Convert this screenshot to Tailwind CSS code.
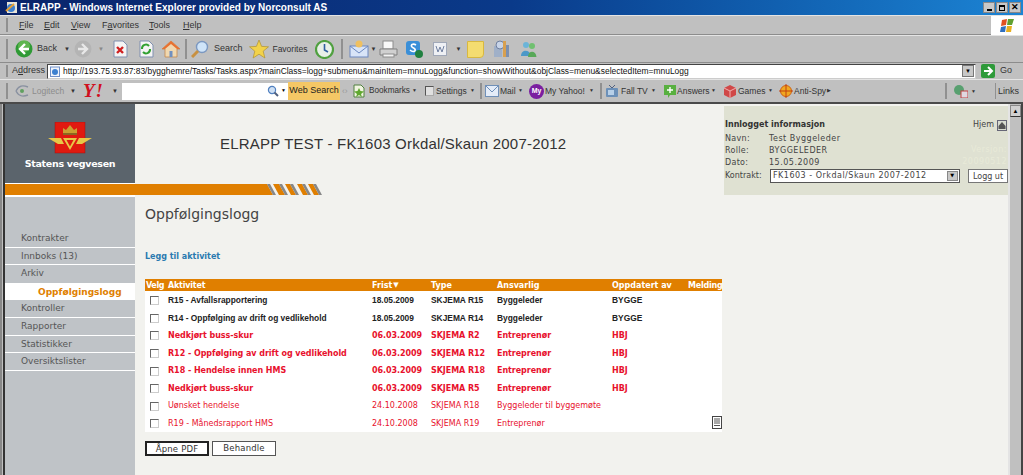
<!DOCTYPE html>
<html lang="en">
<head>
<meta charset="UTF-8">
<title>ELRAPP</title>
<script src="https://cdn.jsdelivr.net/npm/@tailwindcss/browser@4"></script>
</head>
<body class="w-[1023px] h-[475px] overflow-hidden bg-[#c0c0c0] flex flex-col font-['Liberation_Sans',sans-serif] text-[9px] text-[#222]">

<!-- title bar -->
<div class="h-[15px] flex items-center bg-gradient-to-r from-[#0a246a] via-[#0a3a8a] to-[#1c84d4] pl-[5px] pr-[2px]">
    <svg width="13" height="13" viewBox="0 0 13 13"><rect x="2" y="1" width="10" height="11" fill="#e8e4d8"/><circle cx="6" cy="7" r="4" fill="#3c7fd0"/><path d="M1 10 L9 3" stroke="#e8a030" stroke-width="2"/></svg>
    <span class="ml-[2px] text-white font-bold text-[10px]">ELRAPP - Windows Internet Explorer provided by Norconsult AS</span>
    <div class="ml-auto flex gap-[1px]">
        <div class="w-[12px] h-[11px] bg-[#c8c8c8] border border-[#888] flex items-end justify-center pb-[1px]"><div class="w-[5px] h-[2px] bg-black"></div></div>
        <div class="w-[12px] h-[11px] bg-[#c8c8c8] border border-[#888] flex items-center justify-center"><div class="w-[6px] h-[6px] border border-t-2 border-black"></div></div>
        <div class="w-[12px] h-[11px] bg-[#c8c8c8] border border-[#888] flex items-center justify-center text-[9px] leading-none font-bold text-black">✕</div>
    </div>
</div>

<!-- menu -->
<div class="h-[20px] flex items-center border-t border-[#e4e4e4] border-b border-b-[#8c8c8c] relative text-[#333]">
    <div class="ml-[6px] w-[2px] h-[14px] border-l border-r border-[#909090] bg-white"></div>
    <span class="absolute left-[19px] top-[3px]"><span class="underline">F</span>ile</span>
    <span class="absolute left-[44px] top-[3px]"><span class="underline">E</span>dit</span>
    <span class="absolute left-[71px] top-[3px]"><span class="underline">V</span>iew</span>
    <span class="absolute left-[102px] top-[3px]">F<span class="underline">a</span>vorites</span>
    <span class="absolute left-[149px] top-[3px]"><span class="underline">T</span>ools</span>
    <span class="absolute left-[183px] top-[3px]"><span class="underline">H</span>elp</span>
    <div class="ml-auto w-[32px] h-[19px] bg-white flex items-center justify-center">
        <svg width="16" height="15" viewBox="0 0 16 15"><path d="M3 2 L8 1 L7 7 L2 8Z" fill="#e05020"/><path d="M9 1 L15 1 L13 7 L8 7Z" fill="#60a030"/><path d="M2 9 L7 8 L6 14 L1 14Z" fill="#3070c0"/><path d="M8 8 L13 8 L12 14 L7 14Z" fill="#e8b020"/></svg>
    </div>
</div>

<!-- standard buttons -->
<div class="h-[27px] flex items-center border-t border-[#e4e4e4] text-[#333] relative">
    <div class="ml-[6px] w-[2px] h-[20px] border-l border-r border-[#909090] bg-white"></div>
    <svg class="ml-[7px]" width="18" height="18" viewBox="0 0 18 18"><circle cx="9" cy="9" r="8.5" fill="#2f9a35"/><circle cx="9" cy="6" r="6" fill="#8ed06a" opacity=".5"/><path d="M10 4 L5 9 L10 14 M5 9 H14" stroke="#fff" stroke-width="2.4" fill="none"/></svg>
    <span class="ml-[4px]">Back</span>
    <span class="ml-[7px] text-[6px] text-[#333]">▼</span>
    <svg class="ml-[4px]" width="18" height="18" viewBox="0 0 18 18"><circle cx="9" cy="9" r="8.5" fill="#b4b4b4"/><path d="M8 4 L13 9 L8 14 M13 9 H4" stroke="#e8e8e8" stroke-width="2.4" fill="none"/></svg>
    <span class="ml-[6px] text-[6px] text-[#888]">▼</span>
    <svg class="ml-[8px]" width="16" height="18" viewBox="0 0 16 18"><path d="M2 1 H11 L15 5 V17 H2Z" fill="#f4f4f4" stroke="#8090b0"/><path d="M5 7 L11 13 M11 7 L5 13" stroke="#d02020" stroke-width="2.4"/></svg>
    <svg class="ml-[10px]" width="16" height="18" viewBox="0 0 16 18"><path d="M2 1 H11 L15 5 V17 H2Z" fill="#f4f4f4" stroke="#8090b0"/><path d="M4 9 A4 4 0 0 1 11 6 M12 9 A4 4 0 0 1 5 12" stroke="#30a030" stroke-width="2" fill="none"/></svg>
    <svg class="ml-[8px]" width="18" height="18" viewBox="0 0 18 18"><path d="M9 1 L18 9 H15 V17 H3 V9 H0Z" fill="#f0d8b0" stroke="#c08040" stroke-width=".7"/><path d="M9 1 L18 9 H15 L9 4 L3 9 H0Z" fill="#e87030"/><rect x="7.5" y="11" width="3" height="6" fill="#7090c0"/></svg>
    <div class="ml-[5px] w-[2px] h-[20px] border-l border-r border-[#909090] bg-white"></div>
    <svg class="ml-[4px]" width="18" height="18" viewBox="0 0 18 18"><circle cx="11" cy="7" r="5.5" fill="#cfe4f8" stroke="#7c98c0" stroke-width="1.4"/><path d="M7 11 L1 17" stroke="#c89040" stroke-width="3"/></svg>
    <span class="ml-[5px]">Search</span>
    <svg class="ml-[7px]" width="20" height="20" viewBox="0 0 20 20"><path d="M10 1 L12.6 7.4 L19.5 7.8 L14.2 12.2 L15.9 19 L10 15.2 L4.1 19 L5.8 12.2 L.5 7.8 L7.4 7.4Z" fill="#f2d24a" stroke="#b09030" stroke-width=".7"/></svg>
    <span class="ml-[3px] w-[34px] whitespace-nowrap text-[8.5px]">Favorites</span>
    <svg class="ml-[9px]" width="19" height="19" viewBox="0 0 19 19"><circle cx="9.5" cy="9.5" r="8.5" fill="#e8f0e8" stroke="#50a040" stroke-width="2.2"/><path d="M9.5 4 V10 L13 12" stroke="#3060a0" stroke-width="1.6" fill="none"/></svg>
    <div class="ml-[7px] w-[2px] h-[20px] border-l border-r border-[#909090] bg-white"></div>
    <svg class="ml-[6px]" width="20" height="18" viewBox="0 0 20 18"><rect x="1" y="6" width="18" height="11" fill="#d8e4f8" stroke="#6c88c0"/><path d="M1 6 L10 13 L19 6" stroke="#6c88c0" fill="none"/><circle cx="10" cy="4" r="3.5" fill="#f0c060"/></svg>
    <span class="ml-[1px] text-[6px]">▼</span>
    <svg class="ml-[3px]" width="19" height="18" viewBox="0 0 19 18"><rect x="4" y="1" width="10" height="8" fill="#f8f8f8" stroke="#8c8c8c"/><path d="M1 9 H18 V15 H1Z" fill="#d0d0d0" stroke="#808080"/><rect x="4" y="14" width="11" height="3" fill="#f4f4f4" stroke="#8c8c8c"/></svg>
    <svg class="ml-[7px]" width="18" height="18" viewBox="0 0 18 18"><rect x="1" y="1" width="14" height="14" rx="3" fill="#3a8fd8"/><path d="M11 5 C8 3 5 5 7 7 C9 9 11 8 10 11 C8 12 6 11 5 10" stroke="#fff" stroke-width="1.6" fill="none"/><circle cx="14" cy="14" r="4" fill="#208040"/></svg>
    <svg class="ml-[10px]" width="14" height="14" viewBox="0 0 14 14"><rect x=".5" y=".5" width="13" height="13" fill="#eef0f4" stroke="#a0a8b8"/><path d="M3 4 L5 10 L7 5 L9 10 L11 4" stroke="#7080a0" fill="none"/></svg>
    <span class="ml-[8px] text-[6px]">▼</span>
    <div class="ml-[6px] w-[17px] h-[17px] bg-[#f4dc70] border border-[#d8b840] rounded-br-[4px]"></div>
    <svg class="ml-[8px]" width="18" height="18" viewBox="0 0 18 18"><rect x="2" y="6" width="8" height="11" fill="#a0b0c8"/><circle cx="8" cy="5" r="4" fill="#c8d4e8" stroke="#7080a0"/><rect x="11" y="1" width="3" height="16" fill="#d8a050"/><rect x="14" y="5" width="3" height="12" fill="#7c90b0"/></svg>
    <svg class="ml-[10px]" width="17" height="17" viewBox="0 0 17 17"><circle cx="6" cy="4" r="3" fill="#6cb4d8"/><circle cx="12" cy="5" r="3" fill="#70c070"/><path d="M1 15 C1 8 10 8 11 15Z" fill="#4c98c8"/><path d="M8 16 C8 9 16 9 16.500 16Z" fill="#58a858"/></svg>
</div>

<!-- address -->
<div class="h-[17px] flex items-center border-t border-[#8c8c8c] text-[#333] relative">
    <div class="ml-[6px] w-[2px] h-[12px] border-l border-r border-[#909090] bg-white"></div>
    <span class="ml-[4px] w-[35px]">A<span class="underline">d</span>dress</span>
    <div class="w-[929px] h-[15px] bg-white border border-[#444] border-b-[#ccc] border-r-[#ccc] flex items-center pl-[2px]">
        <svg width="10" height="11" viewBox="0 0 10 11"><rect x=".5" y="1" width="9" height="9.500" fill="#f0f4fc" stroke="#7090c8"/><circle cx="5" cy="6" r="3" fill="#3c80d0"/></svg>
        <span class="ml-[3px] whitespace-nowrap text-[#111] text-[8.45px]">http://193.75.93.87:83/bygghemre/Tasks/Tasks.aspx?mainClass=logg+submenu&amp;mainItem=mnuLogg&amp;function=showWithout&amp;objClass=menu&amp;selectedItem=mnuLogg</span>
        <div class="ml-auto mr-[1px] w-[12px] h-[12px] bg-[#c8c8c8] border border-[#777] flex items-center justify-center text-[6px] text-black">▼</div>
    </div>
    <svg class="ml-[5px]" width="14" height="14" viewBox="0 0 14 14"><rect width="14" height="14" rx="2" fill="#2e9a3a"/><path d="M7 3 L11 7 L7 11 M11 7 H3" stroke="#fff" stroke-width="2" fill="none"/></svg>
    <span class="ml-[5px]">Go</span>
</div>

<!-- yahoo toolbar -->
<div class="h-[23px] flex items-center border-t border-[#e4e4e4] text-[#333] text-[8.5px] relative whitespace-nowrap">
    <div class="ml-[6px] w-[2px] h-[16px] border-l border-r border-[#909090] bg-white"></div>
    <svg class="ml-[6px]" width="16" height="14" viewBox="0 0 16 14"><path d="M2 7 C5 1 9 1 14 3 M2 7 C5 13 9 13 14 11" stroke="#8890a0" stroke-width="1.4" fill="none"/><circle cx="8" cy="7" r="2" fill="#60a060"/></svg>
    <span class="ml-[2px] text-[#8c8c8c] w-[38px]">Logitech</span>
    <span class="w-[6px] text-[6px]">▼</span>
    <span class="ml-[7px] w-[24px] h-[16px] text-[#d01020] font-['Liberation_Serif',serif] font-bold italic text-[19px] leading-[16px] tracking-[1px]">Y!</span>
    <span class="ml-[5px] w-[6px] text-[6px]">▼</span>
    <div class="ml-[4px] w-[166px] h-[17px] bg-white flex items-center justify-end pr-[2px]">
        <svg width="12" height="12" viewBox="0 0 12 12"><circle cx="5" cy="5" r="3.6" fill="#cfe0f4" stroke="#5080c0" stroke-width="1.2"/><path d="M7.5 7.500 L11 11" stroke="#506080" stroke-width="2"/></svg>
        <span class="ml-[2px] text-[5px] text-black">▼</span>
    </div>
    <div class="w-[52px] h-[18px] bg-[#f4c765] flex items-center justify-center text-[#222] text-[9px]">Web Search</div>
    <span class="ml-[2px] w-[10px] text-[#999]">‹›</span>
    <svg width="14" height="14" viewBox="0 0 14 14"><path d="M2 1 H9 L12 4 V13 H2Z" fill="#f0f4e0" stroke="#508040"/><path d="M7 4 L8.500 7 L12 7.500 L9 10 L10 13 L7 11 L4 13 L5 10 L2 7.500 L5.500 7Z" fill="#60a830"/></svg>
    <span class="ml-[3px] w-[41px] text-[8.2px]">Bookmarks</span>
    <span class="ml-[2px] w-[5px] text-[5px]">▼</span>
    <div class="ml-[8px] w-[9px] h-[10px] border border-[#555] border-r-[#aaa] border-b-[#aaa] bg-[#e0e0e0]"></div>
    <span class="ml-[2px] w-[32px]">Settings</span>
    <span class="ml-[2px] w-[5px] text-[5px]">▼</span>
    <div class="ml-[5px] w-[2px] h-[16px] border-l border-r border-[#909090] bg-white"></div>
    <svg class="ml-[3px]" width="14" height="12" viewBox="0 0 14 12"><rect x=".5" y=".5" width="13" height="11" fill="#e4ecf8" stroke="#7090b8"/><path d="M1 1 L7 7 L13 1" stroke="#7090b8" fill="none"/></svg>
    <span class="ml-[1px] w-[15px]">Mail</span>
    <span class="ml-[3px] w-[5px] text-[5px]">▼</span>
    <div class="ml-[6px] w-[15px] h-[15px] rounded-full bg-[#7a1fa0] text-white text-[7px] font-bold flex items-center justify-center">My</div>
    <span class="ml-[1px] w-[40px]">My Yahoo!</span>
    <span class="ml-[4px] w-[5px] text-[5px]">▼</span>
    <div class="ml-[6px] w-[2px] h-[16px] border-l border-r border-[#909090] bg-white"></div>
    <svg class="ml-[4px]" width="12" height="14" viewBox="0 0 12 14"><path d="M3 1 L6 4 L9 1" stroke="#506080" fill="none"/><rect y="4" width="12" height="9" rx="1" fill="#6c90b8"/><rect x="2" y="6" width="6" height="5" fill="#b8d0e8"/></svg>
    <span class="ml-[3px] w-[27px]">Fall TV</span>
    <span class="ml-[3px] w-[5px] text-[5px]">▼</span>
    <svg class="ml-[8px]" width="12" height="13" viewBox="0 0 12 13"><path d="M0 0 H12 V10 H6 L4 13 V10 H0Z" fill="#58b040"/><path d="M6 2 V8 M3 5 H9" stroke="#fff" stroke-width="1.4"/></svg>
    <span class="ml-[1px] w-[31px]">Answers</span>
    <span class="ml-[3px] w-[5px] text-[5px]">▼</span>
    <svg class="ml-[8px]" width="12" height="13" viewBox="0 0 12 13"><path d="M6 0 L12 3 V10 L6 13 L0 10 V3Z" fill="#d04848"/><path d="M0 3 L6 6 L12 3 M6 6 V13" stroke="#f0b0b0" fill="none"/></svg>
    <span class="ml-[2px] w-[27px]">Games</span>
    <span class="ml-[3px] w-[5px] text-[5px]">▼</span>
    <svg class="ml-[6px]" width="14" height="14" viewBox="0 0 14 14"><circle cx="7" cy="7" r="5.500" fill="#f0a820" stroke="#d06010"/><path d="M7 0 V14 M0 7 H14" stroke="#c04010"/></svg>
    <span class="ml-[1px] w-[33px]">Anti-Spy</span>
    <span class="text-[5px]">▶</span>
    <div class="absolute left-[945px] top-[3px] w-[2px] h-[16px] border-l border-r border-[#909090] bg-white"></div>
    <svg class="absolute left-[953px] top-[4px]" width="15" height="14" viewBox="0 0 15 14"><circle cx="6" cy="6" r="5" fill="#58a070"/><rect x="8" y="7" width="7" height="7" fill="#e0d8e0" stroke="#c04040"/></svg>
    <span class="absolute left-[971px] top-[8px] text-[5px]">▼</span>
    <div class="absolute left-[995px] top-[3px] w-[1px] h-[16px] bg-[#909090]"></div>
    <span class="absolute left-[998px] top-[5px] text-[9px]">Links</span>
</div>

<div class="h-[2px] bg-[#4a4a4a]"></div>

<!-- window content -->
<div class="flex-1 min-h-0 flex">
    <div class="w-[5px] bg-[#c0c0c0] border-l-2 border-r-2 border-r-[#333] border-l-[#888]"></div>
    <div class="w-[719px] flex flex-col bg-[#f2f2ee]">
        <!-- header -->
        <div class="h-[79px] flex">
            <div class="w-[130px] bg-[#5b646c] flex flex-col items-center pt-[18px]">
                <svg width="44" height="32" viewBox="0 0 44 32">
                    <rect x="7" y="0" width="30" height="31" fill="#e01a10" stroke="#a01010" stroke-width=".5"/>
                    <path d="M15 11 V6 L18 8 L22 3 L26 8 L29 6 V11Z" fill="#caa030"/>
                    <rect x="15" y="11" width="14" height="2" fill="#8c6820"/>
                    <path d="M0 16 H13 L16 22 H10 Z M44 16 H31 L28 22 H34Z" fill="#e8c848"/>
                    <path d="M15 16 H29 L22 28Z" fill="#e8c848"/>
                    <path d="M18.500 18 H25.500 L22 24.500Z" fill="#e01a10"/>
                </svg>
                <span class="mt-[3px] text-white font-bold text-[9.5px] font-['DejaVu_Sans',sans-serif] tracking-[-.3px]">Statens vegvesen</span>
            </div>
            <div class="flex-1 pl-[85px] pt-[31px] text-[15px] leading-[17px] text-[#333] tracking-[.2px]">ELRAPP TEST - FK1603 Orkdal/Skaun 2007-2012</div>
        </div>
        <div class="h-[1px] w-[130px] bg-white"></div>
        <!-- orange bar -->
        <div class="h-[11px] flex bg-[#f2f2ee]">
            <div class="w-[256px] bg-[#e07f00]"></div>
            <svg width="62" height="11" viewBox="0 0 62 11">
                <path d="M0 0 H6 L12 11 H0Z" fill="#e07f00"/>
                <path d="M6 0 H9 L15 11 H12Z" fill="#888"/>
                <path d="M12 0 H18 L24 11 H18Z" fill="#e07f00"/><path d="M18 0 L24 11 H27 L21 0Z" fill="#888"/>
                <path d="M24 0 H29 L35 11 H30Z" fill="#e07f00"/><path d="M29 0 L35 11 H38 L32 0Z" fill="#888"/>
                <path d="M36 0 H41 L47 11 H42Z" fill="#e07f00"/><path d="M41 0 L47 11 H50 L44 0Z" fill="#888"/>
                <path d="M47 0 H52 L58 11 H53Z" fill="#e07f00"/><path d="M52 0 L58 11 H61 L55 0Z" fill="#888"/>
            </svg>
        </div>
        <div class="h-[2px] w-[130px] bg-white"></div>
        <!-- body -->
        <div class="flex-1 min-h-0 flex">
            <div class="w-[130px] bg-[#bfc3c7] pt-[33px] text-[9px] font-['DejaVu_Sans',sans-serif] text-[#555]">
                <div class="h-[17.6px] border-b border-white pl-[16px] leading-[17px]">Kontrakter</div>
                <div class="h-[17.6px] border-b border-white pl-[16px] leading-[17px]">Innboks (13)</div>
                <div class="h-[17.6px] pl-[16px] leading-[17px]">Arkiv</div>
                <div class="h-[17.6px] bg-white pl-[33px] leading-[18px] font-bold text-[#e07f00]">Oppfølgingslogg</div>
                <div class="h-[17.6px] border-b border-white pl-[16px] leading-[17px]">Kontroller</div>
                <div class="h-[17.6px] border-b border-white pl-[16px] leading-[17px]">Rapporter</div>
                <div class="h-[17.6px] border-b border-white pl-[16px] leading-[17px]">Statistikker</div>
                <div class="h-[17.6px] border-b border-white pl-[16px] leading-[17px]">Oversiktslister</div>
            </div>
            <div class="flex-1 pl-[10px] font-['DejaVu_Sans',sans-serif]">
                <h1 class="mt-[9px] text-[14px] leading-[17px] text-[#444] font-normal">Oppfølgingslogg</h1>
                <a class="block mt-[29px] text-[8px] leading-[10px] font-bold text-[#2a7ab0]">Legg til aktivitet</a>
                <!-- task table -->
                <div class="mt-[17px] w-[577px] bg-white text-[8px]">
                    <div class="grid grid-cols-[22px_204px_59px_66px_115px_76px_35px] h-[12px] leading-[13px] bg-[#e07f00] text-white font-bold whitespace-nowrap">
                        <div class="pl-[1px] tracking-[-.4px]">Velg</div><div class="pl-[1px] tracking-[-.2px]">Aktivitet</div>
                        <div class="pl-[1px] flex items-center">Frist<span class="ml-[1px] text-[7px]">▼</span></div>
                        <div class="pl-[1px]">Type</div><div class="pl-[1px]">Ansvarlig</div><div class="pl-[1px]">Oppdatert av</div><div class="pl-[1px] tracking-[-.2px]">Melding</div>
                    </div>
                    <div class="grid grid-cols-[22px_204px_59px_66px_115px_76px_35px] h-[17.6px] pt-[2px] items-center text-[#222] font-bold whitespace-nowrap font-['Liberation_Sans',sans-serif] text-[8.4px]">
                        <div class="pl-[5px]"><div class="w-[9px] h-[9px] bg-white border border-[#666] border-r-[#ccc] border-b-[#ccc]"></div></div>
                        <div class="pl-[1px]">R15 - Avfallsrapportering</div><div class="pl-[1px]">18.05.2009</div><div class="pl-[1px]">SKJEMA R15</div><div class="pl-[1px]">Byggeleder</div><div class="pl-[1px]">BYGGE</div><div></div>
                    </div>
                    <div class="grid grid-cols-[22px_204px_59px_66px_115px_76px_35px] h-[17.6px] pt-[2px] items-center text-[#222] font-bold whitespace-nowrap font-['Liberation_Sans',sans-serif] text-[8.4px]">
                        <div class="pl-[5px]"><div class="w-[9px] h-[9px] bg-white border border-[#666] border-r-[#ccc] border-b-[#ccc]"></div></div>
                        <div class="pl-[1px]">R14 - Oppfølging av drift og vedlikehold</div><div class="pl-[1px]">18.05.2009</div><div class="pl-[1px]">SKJEMA R14</div><div class="pl-[1px]">Byggeleder</div><div class="pl-[1px]">BYGGE</div><div></div>
                    </div>
                    <div class="grid grid-cols-[22px_204px_59px_66px_115px_76px_35px] h-[17.6px] pt-[2px] items-center text-[#e8112d] font-bold whitespace-nowrap tracking-[-.05px]">
                        <div class="pl-[5px]"><div class="w-[9px] h-[9px] bg-white border border-[#666] border-r-[#ccc] border-b-[#ccc]"></div></div>
                        <div class="pl-[1px]">Nedkjørt buss-skur</div><div class="pl-[1px]">06.03.2009</div><div class="pl-[1px]">SKJEMA R2</div><div class="pl-[1px]">Entreprenør</div><div class="pl-[1px]">HBJ</div><div></div>
                    </div>
                    <div class="grid grid-cols-[22px_204px_59px_66px_115px_76px_35px] h-[17.6px] pt-[2px] items-center text-[#e8112d] font-bold whitespace-nowrap tracking-[-.05px]">
                        <div class="pl-[5px]"><div class="w-[9px] h-[9px] bg-white border border-[#666] border-r-[#ccc] border-b-[#ccc]"></div></div>
                        <div class="pl-[1px]">R12 - Oppfølging av drift og vedlikehold</div><div class="pl-[1px]">06.03.2009</div><div class="pl-[1px]">SKJEMA R12</div><div class="pl-[1px]">Entreprenør</div><div class="pl-[1px]">HBJ</div><div></div>
                    </div>
                    <div class="grid grid-cols-[22px_204px_59px_66px_115px_76px_35px] h-[17.6px] pt-[2px] items-center text-[#e8112d] font-bold whitespace-nowrap tracking-[-.05px]">
                        <div class="pl-[5px]"><div class="w-[9px] h-[9px] bg-white border border-[#666] border-r-[#ccc] border-b-[#ccc]"></div></div>
                        <div class="pl-[1px]">R18 - Hendelse innen HMS</div><div class="pl-[1px]">06.03.2009</div><div class="pl-[1px]">SKJEMA R18</div><div class="pl-[1px]">Entreprenør</div><div class="pl-[1px]">HBJ</div><div></div>
                    </div>
                    <div class="grid grid-cols-[22px_204px_59px_66px_115px_76px_35px] h-[17.6px] pt-[2px] items-center text-[#e8112d] font-bold whitespace-nowrap tracking-[-.05px]">
                        <div class="pl-[5px]"><div class="w-[9px] h-[9px] bg-white border border-[#666] border-r-[#ccc] border-b-[#ccc]"></div></div>
                        <div class="pl-[1px]">Nedkjørt buss-skur</div><div class="pl-[1px]">06.03.2009</div><div class="pl-[1px]">SKJEMA R5</div><div class="pl-[1px]">Entreprenør</div><div class="pl-[1px]">HBJ</div><div></div>
                    </div>
                    <div class="grid grid-cols-[22px_204px_59px_66px_115px_76px_35px] h-[17.6px] pt-[2px] items-center text-[#e8112d] whitespace-nowrap">
                        <div class="pl-[5px]"><div class="w-[9px] h-[9px] bg-white border border-[#666] border-r-[#ccc] border-b-[#ccc]"></div></div>
                        <div class="pl-[1px]">Uønsket hendelse</div><div class="pl-[1px]">24.10.2008</div><div class="pl-[1px]">SKJEMA R18</div><div class="pl-[1px]">Byggeleder til byggemøte</div><div></div><div></div>
                    </div>
                    <div class="grid grid-cols-[22px_204px_59px_66px_115px_76px_35px] h-[17.6px] pt-[2px] items-center text-[#e8112d] whitespace-nowrap">
                        <div class="pl-[5px]"><div class="w-[9px] h-[9px] bg-white border border-[#666] border-r-[#ccc] border-b-[#ccc]"></div></div>
                        <div class="pl-[1px]">R19 - Månedsrapport HMS</div><div class="pl-[1px]">24.10.2008</div><div class="pl-[1px]">SKJEMA R19</div><div class="pl-[1px]">Entreprenør</div><div></div>
                        <div class="flex justify-end -mt-[2px]">
                            <svg width="10" height="13" viewBox="0 0 10 13"><rect x=".5" y=".5" width="9" height="12" fill="#fff" stroke="#444"/><path d="M2 3 H8 M2 5 H8 M2 7 H8 M2 9.500 H8" stroke="#555"/></svg>
                        </div>
                    </div>
                </div>
                <div class="mt-[9px] flex gap-[3px] text-[8.5px] text-[#333]">
                    <button class="w-[64px] h-[15px] leading-[12px] bg-white border-2 border-[#222] tracking-[.2px]">Åpne PDF</button>
                    <button class="w-[64px] h-[15px] leading-[13px] bg-white border border-[#555] tracking-[.2px]">Behandle</button>
                </div>
            </div>
        </div>
    </div>

    <!-- right column -->
    <div class="w-[284px] bg-[#f2f2ee]">
        <div class="h-[89px] mt-[2px] bg-[#dfe1d2] pl-[1px] pt-[13px] font-['DejaVu_Sans',sans-serif] text-[8px] tracking-[.5px] text-[#444] relative">
            <div class="font-bold text-[#333] leading-[12px] tracking-normal">Innlogget informasjon</div>
            <div class="grid grid-cols-[44px_1fr] leading-[12px] mt-[2px]">
                <span class="tracking-[.3px]">Navn:</span><span>Test Byggeleder</span>
                <span class="tracking-[.3px]">Rolle:</span><span>BYGGELEDER</span>
                <span class="tracking-[.3px]">Dato:</span><span>15.05.2009</span>
            </div>
            <div class="flex items-center">
                <span class="w-[45px] tracking-[0]">Kontrakt:</span>
                <div class="w-[190px] h-[14px] bg-white border border-[#555] flex items-center pl-[2px]">
                    <span class="whitespace-nowrap">FK1603 - Orkdal/Skaun 2007-2012</span>
                    <div class="ml-auto mr-[1px] w-[11px] h-[10px] bg-[#c8c8c8] border border-[#888] flex items-center justify-center text-[5px] text-black">▼</div>
                </div>
                <button class="ml-[8px] w-[40px] h-[14px] bg-white border border-[#777] leading-[11px] tracking-[0]">Logg ut</button>
            </div>
            <div class="absolute right-[1px] top-[13px] flex items-center tracking-normal">
                Hjem
                <svg class="ml-[3px]" width="10" height="11" viewBox="0 0 10 11"><rect x=".5" y=".5" width="9" height="10" fill="#d8dcd0" stroke="#667"/><path d="M1.500 6 L5 2 L8.500 6 V9 H1.500Z" fill="#555"/></svg>
            </div>
            <div class="absolute right-[1px] top-[38px] text-right text-[#e8ead8] leading-[12px]">Versjon:<br>20090512</div>
        </div>
    </div>

    <!-- scrollbar -->
    <div class="w-[15px] flex flex-col border-l-2 border-l-[#e4e4e4] border-r-2 border-r-[#444] bg-[#c0c0c0]">
        <div class="h-[12px] mt-[1px] bg-[#d0d0d0] border border-[#888] border-b-[#333] flex items-center justify-center text-[6px] leading-none text-black">▲</div>
    </div>
</div>
</body>
</html>
